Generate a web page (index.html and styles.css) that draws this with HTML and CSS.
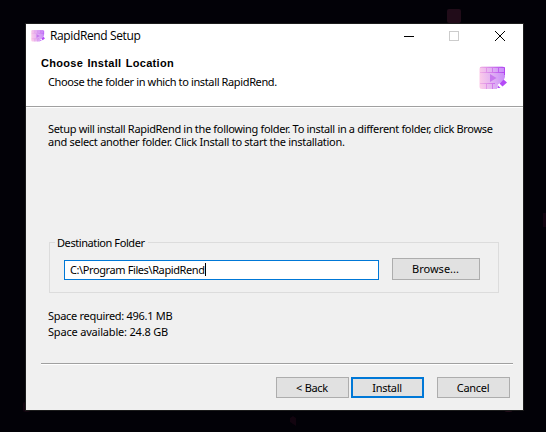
FILE: index.html
```html
<!DOCTYPE html>
<html lang="en">
<head>
<meta charset="utf-8">
<title>RapidRend Setup</title>
<link rel="stylesheet" href="styles.css">
</head>
<body>
<svg class="backdrop" width="546" height="432" aria-hidden="true">
  <rect x="447" y="9" width="14" height="14" rx="2" fill="#210c19"/>
  <rect x="23" y="402" width="7" height="10" rx="2" fill="#12040f"/>
  <path d="M290 418l3-2 3 2v8l-6-4z" fill="#12040f"/>
  <rect x="504" y="404" width="9" height="8" rx="3" fill="#210c19"/>
  <rect x="543" y="213" width="3" height="14" fill="#12040f"/>
</svg>
<main class="window">
  <header class="top">
    <div class="titlebar">
      <svg class="app-icon" viewBox="0 0 28 24" width="14" height="12"><use href="#film"/></svg>
      <span class="caption">RapidRend Setup</span>
      <svg class="controls" width="106" height="12" shape-rendering="crispEdges">
        <path d="M0 6.500h10" stroke="#000" fill="none"/>
        <rect x="45.500" y="1.500" width="9" height="9" fill="none" stroke="#ccc"/>
        <path d="M91 1l10 10M101 1l-10 10" stroke="#000" fill="none" shape-rendering="auto"/>
      </svg>
    </div>
    <div class="banner">
      <div>
        <h1>Choose Install Location</h1>
        <p class="sub">Choose the folder in which to install RapidRend.</p>
      </div>
      <svg class="logo" viewBox="0 0 28 24" width="28" height="24">
        <defs>
          <linearGradient id="g" x1="0" x2="1" y1=".4" y2=".3">
            <stop offset="0" stop-color="#fbcbe9"/><stop offset=".5" stop-color="#e0b0f3"/><stop offset="1" stop-color="#c98afa"/>
          </linearGradient>
          <linearGradient id="s" gradientUnits="userSpaceOnUse" x1="0" x2="26" y1="0" y2="0">
            <stop offset="0" stop-color="#f3b4e4"/><stop offset="1" stop-color="#b044f2"/>
          </linearGradient>
        </defs>
        <g id="film">
          <path d="M3 .5h20q3 0 3 3V11l-1 2.500-6 5-1 4.500H3q-2.500 0-2.500-2.500V3Q.5.500 3 .5z" fill="url(#g)"/>
          <path d="M1 1.500h24.500V9M1 6.500h24M7.500 1v5M13.500 1v5M19.500 1v5M1 17.500h15M7.500 18v5M13.500 18v5" fill="none" stroke="url(#s)"/>
          <path d="M11 8l6.500 4-6.500 4z" fill="#c777ee"/>
          <path d="M20.500 17.500l4-4 3.500 3-4.500 4zM19 19.500l2.500 2.500h-3z" fill="#b44af7"/>
        </g>
      </svg>
    </div>
  </header>
  <section class="body">
    <p class="intro"><span class="l1">Setup will install RapidRend in the following folder. To install in a different folder, click Browse</span><span class="l2">and select another folder. Click Install to start the installation.</span></p>
    <fieldset class="group">
      <legend>Destination Folder</legend>
      <div class="field"><span class="path">C:\Program Files\RapidRend</span><i class="caret"></i></div>
      <button class="browse">Browse...</button>
    </fieldset>
    <p class="space"><span class="s1">Space required: 496.1 MB</span><span class="s2">Space available: 24.8 GB</span></p>
  </section>
  <footer>
    <button>&lt; Back</button>
    <button class="primary">Install</button>
    <button class="cancel">Cancel</button>
  </footer>
</main>
</body>
</html>
```
FILE: styles.css
```css
* { box-sizing: border-box; }
body {
  margin: 0;
  width: 546px;
  height: 432px;
  padding: 23px 0 0 25px;
  overflow: hidden;
  background: #020107;
  color: #000;
  font: 11px/13px "Noto Sans", "Open Sans", sans-serif;
  white-space: nowrap;
}
h1, p { margin: 0; }
.backdrop { position: absolute; left: 0; top: 0; }
.window {
  position: relative;
  display: flex;
  flex-direction: column;
  width: 499px;
  height: 388px;
  border: 1px solid #1c1c1c;
  background: #f0f0f0;
}
.top { height: 84px; background: #fff; border-bottom: 1px solid #fff; box-shadow: inset 0 -1px #a0a0a0; }
.titlebar { display: flex; align-items: center; height: 24px; padding-left: 5px; }
.caption { margin-left: 5px; font: 12px/16px "Open Sans", sans-serif; letter-spacing: -.38px; }
.controls { margin-left: auto; margin-right: 13px; }
.banner { display: flex; justify-content: space-between; padding: 9px 16px 0 15px; }
h1 { font: bold 11px/13px "Liberation Sans", sans-serif; letter-spacing: .3px; word-spacing: 1px; }
.sub { margin: 5px 0 0 7px; letter-spacing: -.37px; }
.logo { margin-top: 9px; }
.body { flex: 1; padding: 14px 24px 0 22px; }
.intro span, .space span { display: block; }
.l1 { letter-spacing: -.335px; }
.l2 { letter-spacing: -.28px; }
.group {
  position: relative;
  display: flex;
  align-items: flex-start;
  margin: 88px 0 0 1px;
  padding: 9px 18px 0 14px;
  height: 57px;
  min-width: 0;
  border: 1px solid #dcdcdc;
}
legend { margin-left: -9px; padding: 0 3px 0 2px; letter-spacing: -.42px; }
.field {
  display: flex;
  align-items: center;
  width: 315px;
  height: 20px;
  margin-top: 2px;
  padding: 0 0 2px 5px;
  border: 1px solid #0078d7;
  background: #fff;
}
.path { letter-spacing: -.4px; }
.caret { width: 1px; height: 13px; margin-top: 1px; background: #000; }
button {
  width: 73px;
  height: 21px;
  padding: 0 1px 0 0;
  border: 1px solid #adadad;
  background: #e1e1e1;
  color: #000;
  font: inherit;
  letter-spacing: -.3px;
}
.browse { width: 88px; height: 22px; margin-left: 13px; letter-spacing: 0; padding-bottom: 1px; }
.space { margin-top: 15px; line-height: 16px; }
.s1 { letter-spacing: -.3px; }
.s2 { letter-spacing: -.19px; }
footer {
  display: flex;
  gap: 2px;
  height: 47px;
  margin: 0 10px 0 15px;
  padding: 13px 3px 0 0;
  justify-content: flex-end;
  border-top: 1px solid #a0a0a0;
  box-shadow: inset 0 1px #fff;
}
.primary { border: 2px solid #0078d7; }
.cancel { margin-left: 11px; }
```
